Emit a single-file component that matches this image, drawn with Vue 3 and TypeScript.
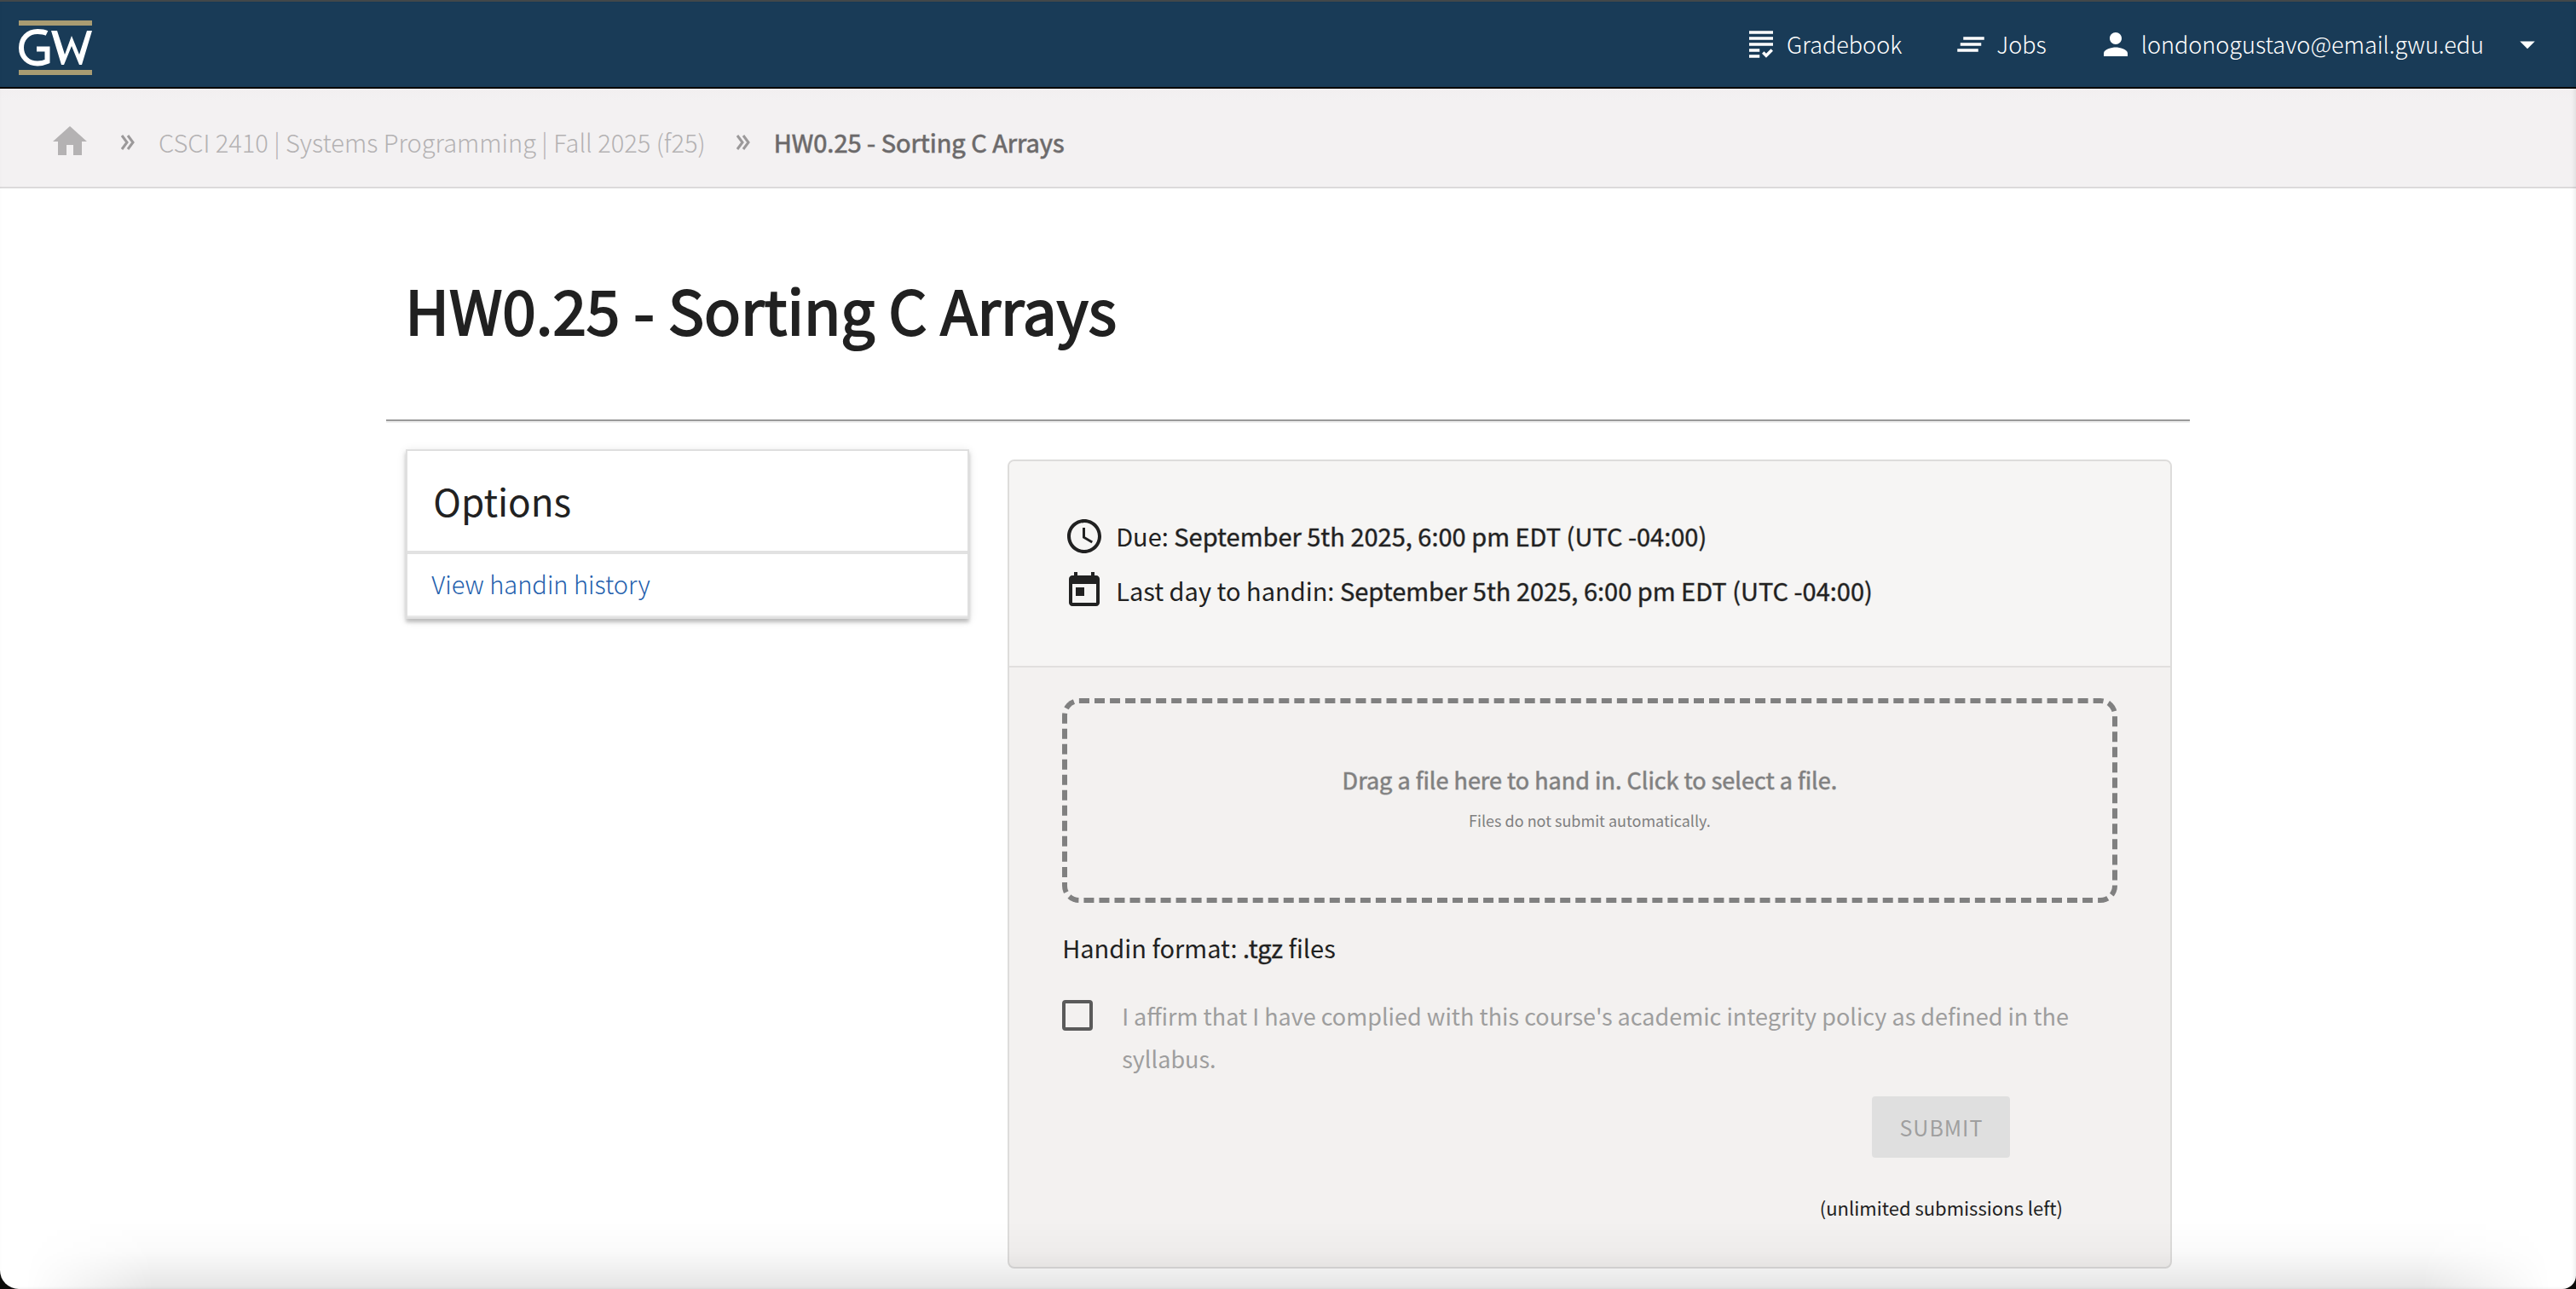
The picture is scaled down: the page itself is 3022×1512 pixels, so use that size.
<script setup lang="ts">
import { ref } from 'vue'

interface NavItem {
  label: string
  icon: string
}

const navItems: NavItem[] = [
  {
    label: 'Gradebook',
    icon: 'M4 7h16v2H4zM4 13h16v-2H4zM4 17h7v-2H4zM4 21h7v-2H4zM15.41 18.17L14 16.75l-1.41 1.41L15.41 21 20 16.42 18.58 15zM4 3v2h16V3z',
  },
  { label: 'Jobs', icon: 'M5 13h14v-2H5v2zm-2 4h14v-2H3v2zM7 7v2h14V7H7z' },
]

const assignment = 'HW0.25 - Sorting C Arrays'
const deadline = 'September 5th 2025, 6:00 pm EDT (UTC -04:00)'
const affirmed = ref(false)
</script>

<template>
  <div class="page">
    <header class="topbar">
      <a href="#" class="logo" aria-label="GW">
        <svg viewBox="0 0 86 64" width="86" height="64" aria-hidden="true">
          <path d="M0 0h86v6H0zM0 58h86v6H0z" fill="#a99c72" />
          <path
            d="M33 15C29 13 26 13 22 13C11 13 3 21 3 32C3 43 11 50.500 22 50.500C27 50.500 30 49.500 33.500 48V33.500H21"
            fill="none" stroke="#fff" stroke-width="6"
          />
          <path d="M38 12h7l9 28 8-22 9 22 9-28h6L74 52h-3l-9-22-9 22h-3z" fill="#fff" />
        </svg>
      </a>
      <nav class="nav">
        <a v-for="item in navItems" :key="item.label" href="#" class="nav-link">
          <svg viewBox="0 0 24 24" class="nav-icon" aria-hidden="true"><path :d="item.icon" /></svg>
          {{ item.label }}
        </a>
        <button type="button" class="nav-link user">
          <svg viewBox="0 0 24 24" class="nav-icon" aria-hidden="true">
            <path d="M12 12c2.210 0 4-1.790 4-4s-1.790-4-4-4-4 1.790-4 4 1.790 4 4 4zm0 2c-2.670 0-8 1.340-8 4v2h16v-2c0-2.660-5.330-4-8-4z" />
          </svg>
          londonogustavo@email.gwu.edu
          <svg viewBox="0 0 24 24" class="nav-icon caret" aria-hidden="true"><path d="M7 10l5 5 5-5z" /></svg>
        </button>
      </nav>
    </header>

    <nav class="crumbs" aria-label="Breadcrumb">
      <a href="#" class="home" aria-label="Home">
        <svg viewBox="0 0 24 24" width="48" height="48" aria-hidden="true">
          <path d="M10 20v-6h4v6h5v-8h3L12 3 2 12h3v8z" />
        </svg>
      </a>
      <svg class="chevron" viewBox="0 0 16 18" aria-hidden="true"><path d="M1 1l6 8-6 8M8 1l6 8-6 8" /></svg>
      <a href="#" class="course">CSCI 2410 | Systems Programming | Fall 2025 (f25)</a>
      <svg class="chevron" viewBox="0 0 16 18" aria-hidden="true"><path d="M1 1l6 8-6 8M8 1l6 8-6 8" /></svg>
      <span class="current">{{ assignment }}</span>
    </nav>

    <main class="container">
      <h1>{{ assignment }}</h1>
      <hr />
      <div class="columns">
        <aside class="options">
          <h2>Options</h2>
          <a href="#">View handin history</a>
        </aside>

        <section class="panel">
          <div class="dates">
            <p>
              <svg viewBox="0 0 24 24" width="48" height="48" aria-hidden="true">
                <path d="M11.990 2C6.470 2 2 6.480 2 12s4.470 10 9.990 10C17.520 22 22 17.520 22 12S17.520 2 11.990 2zM12 20c-4.420 0-8-3.580-8-8s3.580-8 8-8 8 3.580 8 8-3.580 8-8 8z" />
                <path d="M12.500 7H11v6l5.250 3.150.75-1.230-4.500-2.670z" />
              </svg>
              <span>Due: <b>{{ deadline }}</b></span>
            </p>
            <p>
              <svg viewBox="0 0 24 24" width="48" height="48" aria-hidden="true">
                <path d="M19 3h-1V1h-2v2H8V1H6v2H5c-1.110 0-1.990.9-1.990 2L3 19c0 1.100.89 2 2 2h14c1.100 0 2-.9 2-2V5c0-1.100-.9-2-2-2zm0 16H5V8h14v11zM7 10h5v5H7z" />
              </svg>
              <span>Last day to handin: <b>{{ deadline }}</b></span>
            </p>
          </div>

          <form class="handin" @submit.prevent>
            <button type="button" class="dropzone">
              <span class="drop-title">Drag a file here to hand in. Click to select a file.</span>
              <span class="drop-note">Files do not submit automatically.</span>
            </button>
            <p class="format">Handin format: <b>.tgz</b> files</p>
            <div class="affirm">
              <input id="integrity" v-model="affirmed" type="checkbox" />
              <label for="integrity">I affirm that I have complied with this course's academic integrity policy as defined in the syllabus.</label>
            </div>
            <div class="actions">
              <button type="submit" class="submit" disabled>SUBMIT</button>
              <p>(unlimited submissions left)</p>
            </div>
          </form>
        </section>
      </div>
    </main>
    <div class="dock-shade" aria-hidden="true"></div>
    <div class="frame" aria-hidden="true"></div>
  </div>
</template>

<style>
body {
  background: #fff;
}
</style>

<style scoped>
* {
  box-sizing: border-box;
}

.page {
  font-family: "Noto Sans CJK SC", "Noto Sans", sans-serif;
  font-size: 29px;
  line-height: 50px;
  color: #212121;
}

a {
  color: inherit;
  text-decoration: none;
}

button {
  font: inherit;
  color: inherit;
  border: 0;
  background: none;
}

p,
h1,
h2 {
  margin: 0;
}

b {
  font-weight: 400;
  -webkit-text-stroke: 1px rgba(33, 33, 33, 0.4);
}

svg {
  flex: none;
  display: block;
  fill: currentColor;
}

.topbar {
  display: flex;
  align-items: center;
  justify-content: space-between;
  height: 104px;
  padding: 8px 36px 0 22px;
  border-top: 2px solid #454a4c;
  border-bottom: 2px solid #000;
  background: #193b57;
  color: #fff;
}

.nav {
  display: flex;
  align-items: center;
  gap: 60px;
  margin-top: -8px;
  font-size: 27px;
  font-weight: 300;
}

.nav-link {
  display: flex;
  align-items: center;
  gap: 9px;
  padding: 0;
}

.nav-icon {
  width: 42px;
  height: 42px;
}

.caret {
  margin-left: 21px;
}

.crumbs {
  display: flex;
  align-items: center;
  padding: 38px 58px 29px;
  border-bottom: 2px solid #dcdadb;
  background: linear-gradient(#f2eff0, #f3f1f2 14px);
  line-height: 48px;
  color: #b4b2b3;
}

.chevron {
  width: 16px;
  height: 18px;
  margin: 2px 28px 0 36px;
  fill: none;
  stroke: #9b999a;
  stroke-width: 3;
}

.course {
  font-weight: 300;
}

.current {
  -webkit-text-stroke: 1px rgba(107, 105, 106, 0.7);
  color: #6b696a;
}

.container {
  width: 70%;
  margin: 0 auto;
}

h1 {
  padding: 96px 22px 85px;
  font-size: 71px;
  line-height: 90px;
  font-weight: 400;
  -webkit-text-stroke: 2px currentColor;
}

hr {
  height: 4px;
  margin: 0;
  border: 0;
  border-top: 2px solid #9a9a9a;
  background: #eee;
}

.columns {
  display: flex;
  align-items: flex-start;
  gap: 45px;
  padding: 31px 21px 16px 23px;
}

.options {
  flex: 0 0 calc(32% - 2px);
  border: 2px solid #dfdfdf;
  box-shadow: 0 4px 4px rgba(0, 0, 0, 0.2), 0 2px 10px rgba(0, 0, 0, 0.12);
}

.options h2 {
  padding: 0 30px;
  font-size: 44px;
  line-height: 117px;
  font-weight: 400;
}

.options a {
  display: block;
  padding: 0 28px 3px;
  border-top: 4px solid #e2e2e2;
  border-bottom: 2px solid #e8e8e8;
  line-height: 69px;
  font-weight: 300;
  color: #2360ad;
}

.panel {
  flex: 1;
  margin-top: 12px;
  border: 2px solid #dddcdb;
  border-radius: 8px;
  background: #f3f1f0;
}

.dates {
  display: flex;
  flex-direction: column;
  gap: 16px;
  padding: 64px;
  border-bottom: 2px solid #e1dfde;
  border-radius: 6px 6px 0 0;
  background: #f6f5f4;
}

.dates p {
  display: flex;
  align-items: flex-start;
  gap: 13px;
  line-height: 46px;
}

.handin {
  padding: 36px 62px 53px;
}

.dropzone {
  display: flex;
  flex-direction: column;
  align-items: center;
  justify-content: center;
  width: 100%;
  height: 240px;
  padding: 0 0 4px;
  border: 6px dashed #808080;
  border-radius: 20px;
  font-size: 27px;
  color: #808080;
}

.drop-title {
  -webkit-text-stroke: 1px rgba(128, 128, 128, 0.6);
}

.drop-note {
  font-size: 18px;
  line-height: 44px;
}

.format {
  margin-top: 27px;
}

.affirm {
  display: flex;
  align-items: flex-start;
  gap: 34px;
  margin-top: 31px;
  font-size: 27px;
  color: #9e9e9e;
}

.affirm input {
  appearance: none;
  flex: none;
  width: 36px;
  height: 36px;
  margin: 6px 0 0;
  border: 4px solid #5a5a5a;
  border-radius: 4px;
}

.actions {
  display: flex;
  flex-direction: column;
  align-items: center;
  width: calc(100% / 3);
  margin: 19px 0 0 auto;
}

.submit {
  height: 72px;
  padding: 0 32px;
  border-radius: 4px;
  background: #dfdfdf;
  font-size: 25px;
  letter-spacing: 1px;
  color: #9f9f9f;
}

.actions p {
  margin-top: 41px;
  font-size: 22px;
  line-height: 34px;
}

.dock-shade {
  position: fixed;
  right: 0;
  bottom: 0;
  left: 0;
  height: 80px;
  background: linear-gradient(transparent, rgba(0, 0, 0, 0.02) 45%, rgba(0, 0, 0, 0.1));
  mask-image: linear-gradient(90deg, transparent 30px, #000 180px, #000 calc(100% - 180px), transparent calc(100% - 30px));
  pointer-events: none;
}

.frame {
  position: fixed;
  inset: 0;
  overflow: hidden;
  pointer-events: none;
  box-shadow: inset -2px 0 4px rgba(0, 0, 0, 0.08);
}

.frame::before {
  content: "";
  position: absolute;
  inset: -40px 0 0;
  border-radius: 0 0 16px 22px;
  box-shadow: 0 0 0 30px #0c0c0a;
}
</style>
